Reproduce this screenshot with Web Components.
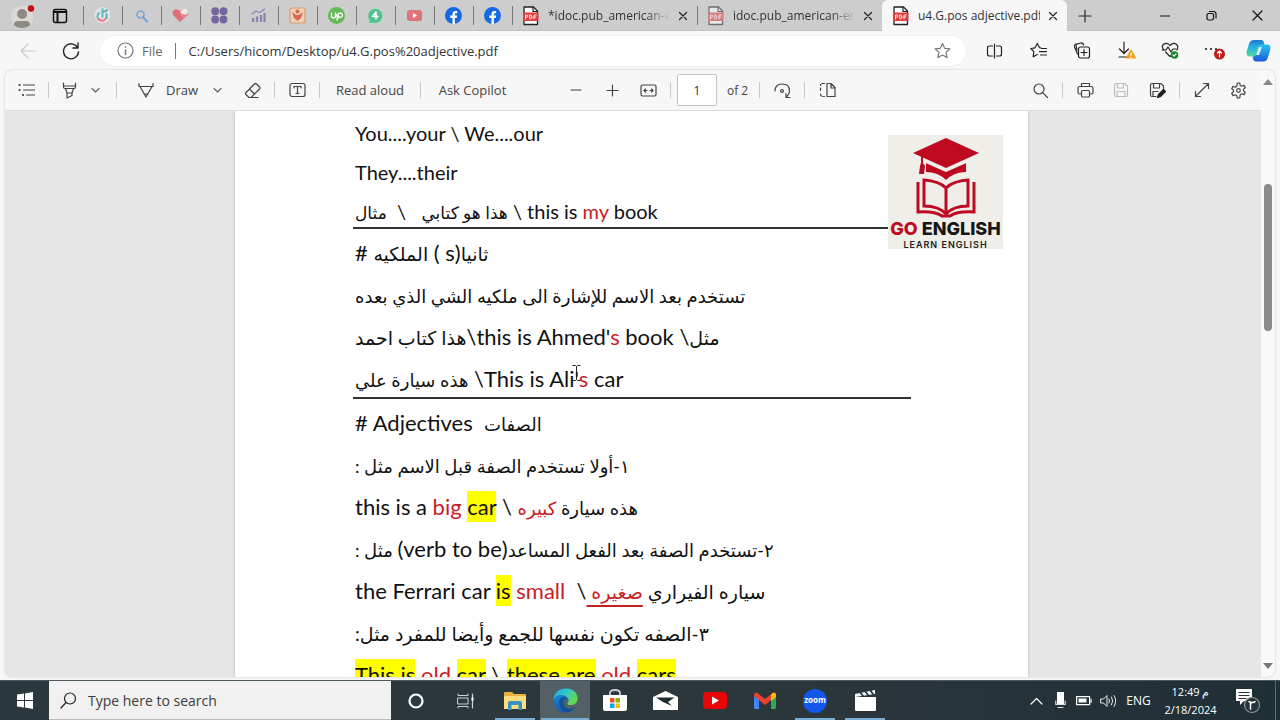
<!DOCTYPE html>
<html lang="en">
<head>
<meta charset="utf-8">
<title>u4.G.pos adjective.pdf</title>
<style>
html,body{margin:0;height:100%}
body{font-family:"Open Sans","Noto Sans",sans-serif;color:#2b2b2b;background:#f7f7f7;overflow:hidden}
</style>
</head>
<body>
<desktop-screen></desktop-screen>
<script>
const S = (body, w = 20, h = w, extra = '') =>
  `<svg width="${w}" height="${h}" viewBox="0 0 ${w} ${h}" fill="none" stroke="currentColor" stroke-width="1.2" stroke-linecap="round" stroke-linejoin="round" aria-hidden="true" ${extra}>${body}</svg>`;
const pdf = S(`<path d="M3 1h9.500l4 4v13.500H3z" fill="#fff" stroke="#222" stroke-width="1.300"/><path d="M12 1V5.500h4.500" stroke="#222"/><rect x="2" y="6.500" width="15.500" height="8.500" rx="1" fill="#e23b3b" stroke="none"/><path d="M4.500 13V9h1.300a1 1 0 010 2.200H4.500M8.800 9v4h.7q1.500-.3 1.500-2t-1.500-2zM13 13V9h2.200M13 11h1.800" stroke="#fff" stroke-width=".9"/>`, 19, 20);
const ICONS = {
  avatar: S(`<circle cx="12" cy="14" r="11" fill="#dcd9d5" stroke="none"/><circle cx="12" cy="11" r="5" fill="#8d8984" stroke="none"/><path d="M4 22q0-4 4-4h8q4 0 4 4-3 3-8 3t-8-3z" fill="#8d8984" stroke="none"/><circle cx="21" cy="5.500" r="3.200" fill="#c30d0d" stroke="none"/>`, 26, 26),
  workspace: S(`<rect x="1.500" y="1.500" width="13" height="13" rx="2" stroke="#111" stroke-width="1.500"/><path d="M2 4h12M5.500 5v9" stroke="#111" stroke-width="2"/>`, 16),
  tik: S(`<circle cx="8.500" cy="8" r="8" fill="#e4e2e3" stroke="none"/><path d="M8.500 2v8M5 6q-3 3-.5 6.500" stroke="#63c0bd" stroke-width="2"/><path d="M4.500 12q4 4 8-1" stroke="#e8788e" stroke-width="2"/><path d="M8.500 5q4-1 4.500-2M12.500 7v4" stroke="#5aa9b8" stroke-width="1.800"/>`, 17),
  find: S(`<circle cx="6.500" cy="6.500" r="3.500" stroke="#71a5d2" stroke-width="1.500"/><path d="M9 9l4 4.500" stroke="#71a5d2" stroke-width="2"/>`, 16),
  heart: S(`<path d="M8 15L1.500 8.500Q-.5 5 2 3t6 1q3-3 6-1t1 5.500z" fill="#e07078" stroke="none"/><path d="M8 5l3-3q4-1 5 3l-2 3-4-1z" fill="#f3e8e8" stroke="none"/><path d="M9 7l3 3" stroke="#e99"/>`, 17),
  dots: S(`<g fill="#74669a" stroke="none"><circle cx="4.200" cy="4.200" r="3.900"/><circle cx="12.500" cy="4.200" r="3.900"/><circle cx="4.200" cy="12.500" r="3.900"/><circle cx="12.500" cy="12.500" r="3.900"/></g>`, 17),
  chart: S(`<path d="M3 11v4M7 9.500V15M11 8v7M14.500 6v9" stroke="#8984ae" stroke-width="2.200" stroke-linecap="butt"/><path d="M2 7l4-3 4 1.500 4.500-3.500" stroke="#8984ae"/>`, 17),
  person: S(`<rect x="1" y="1" width="15" height="15" rx="2" fill="#ecd2b9" stroke="#d79c73"/><circle cx="8.500" cy="4.500" r="2" fill="#d8684e" stroke="none"/><path d="M3 5l2 6 3.500 3L12 11l2-6-4 3H7z" fill="#d8684e" stroke="none"/>`, 17),
  up: S(`<circle cx="8.500" cy="8.500" r="8.500" fill="#66b957" stroke="none"/><path d="M3.500 6v3q0 2 2 2t2-2V6q1 3 2.500 5M9 13l1-5q.6-2 2.500-2 2 .3 2 2.300t-2 2.200q-1.500 0-2.500-2" stroke="#fff" stroke-width="1.300"/>`, 17),
  four: S(`<path d="M2 15l-1 1.500 5-.5a7.500 7.500 0 10-4-3z" fill="#55bf8e" stroke="#bfe3d0" stroke-width=".8"/><path d="M9 12V5L5.500 9.500H11" stroke="#fff" stroke-width="1.500"/>`, 17),
  ytPale: S(`<rect x="0" y="2" width="15" height="11" rx="2.500" fill="#dd747c" stroke="none"/><path d="M6 5l4 2.500L6 10z" fill="#fff" stroke="none"/>`, 15),
  fb: S(`<circle cx="8.500" cy="8.500" r="8.500" fill="#1768e5" stroke="none"/><path d="M7.500 17v-6H5.300V8.500h2.200V7q0-3 3-3h1.700v2.300H11q-1.100 0-1.100 1.200v1h2.200l-.4 2.500H9.900v6z" fill="#fff" stroke="none"/>`, 17),
  pdf, x: S(`<path d="M1.500 1.500l7 7m0-7l-7 7" stroke="#222"/>`, 10),
  plus: S(`<path d="M7 1v12M1 7h12"/>`, 14),
  min: S(`<path d="M0 5h10" stroke="#111"/>`, 10),
  restore: S(`<rect x="1" y="3.500" width="6.500" height="6.500" rx="1.500" stroke="#111"/><path d="M3.500 1.500h4q2.500 0 2.500 2.500v4" stroke="#111"/>`, 11),
  close: S(`<path d="M1 1l9 9m0-9l-9 9" stroke="#111"/>`, 11),
  back: S(`<path d="M16 8H1m7-7L1 8l7 7" stroke="#c9c9c9"/>`, 17, 16),
  refresh: S(`<path d="M15.500 5.500A7.500 7.500 0 1016.500 10M16 1v5h-5" stroke="#222" stroke-width="1.400"/>`, 18),
  info: S(`<circle cx="8.500" cy="8.500" r="7.500" stroke="#777"/><path d="M8.500 8v4.500M8.500 5v.3" stroke="#777" stroke-width="1.500"/>`, 17),
  star: S(`<path d="M8.500 1.500l2.200 4.800 5.200.6-3.900 3.500 1.100 5.200-4.600-2.600-4.600 2.600L5 10.400 1.100 6.900l5.200-.6z" stroke="#777"/>`, 17),
  split: S(`<path d="M6.500 3H3.500Q1.500 3 1.500 5v6q0 2 2 2h3M10.500 3h3q2 0 2 2v6q0 2-2 2h-3M8.500 1v14" stroke="#222"/>`, 17, 16),
  favs: S(`<path d="M11 6l-1.500-.3L7.300 1.500 5 5.800l-4.200.7 3 3.200-.6 5 4.100-2.200M11.500 6.500h5M9.500 9.700h7M10.500 13h6" stroke="#222"/>`, 17),
  collect: S(`<path d="M4.500 12L1.500 5q-.5-2 1-2.700L8 1q2-.3 2.600 2" stroke="#222"/><rect x="5.500" y="5" width="11" height="11" rx="2" stroke="#222"/><path d="M11 7.500v6M8 10.500h6M3 3l1 5" stroke="#222"/>`, 18),
  down: S(`<path d="M7 1v11M2.500 8L7 12.500 11.500 8M2 16h8" stroke="#222"/><path d="M14 9l4.500 8h-9z" fill="#f5a11a" stroke="#f5a11a"/><path d="M14 12v2.500M14 16.300v.1" stroke="#fff"/>`, 19),
  health: S(`<path d="M3 8Q-.5 4 3 2t6 1.500Q12 0 15 2t1 6M4.500 10l4.500 4.500L11 13M1 8h4l2-3 3 5 2-3h3" stroke="#222"/><circle cx="13.500" cy="13" r="3.800" fill="#128a22" stroke="none"/><path d="M12 13l1 1 2-2" stroke="#fff"/>`, 18),
  more: S(`<g fill="#222" stroke="none"><circle cx="3" cy="7" r="1.100"/><circle cx="8" cy="7" r="1.100"/><circle cx="13" cy="7" r="1.100"/></g><circle cx="16.500" cy="12" r="5.500" fill="#b9211d" stroke="none"/><path d="M16.500 15V9.500M14.500 11l2-2 2 2" stroke="#fff"/>`, 22, 18),
  copilot: `<svg width="25" height="23" viewBox="0 0 25 23" aria-hidden="true"><defs><linearGradient id="a" x1="0" y1="0" x2="0" y2="1"><stop stop-color="#1e75d0"/><stop offset=".45" stop-color="#22b6dc"/><stop offset="1" stop-color="#58d99a"/></linearGradient><linearGradient id="b" x1="0" y1="0" x2="0" y2="1"><stop stop-color="#2ac4ea"/><stop offset="1" stop-color="#1b59dd"/></linearGradient></defs><path d="M8 1h7q2.500 0 3 3l.5 2h-4q-2 0-2.600 2L10 15q-.8 2.500-3 2.500H4Q0 17.500.5 13L3 5q1-4 5-4z" fill="url(#a)"/><path d="M17 22.500h-7q-2.500 0-3-3l-.3-2q2.600 0 3.300-2.500L12 8q.8-2.500 3-2.500h6q4 0 3.500 4.500L22 18q-1 4.500-5 4.500z" fill="url(#b)"/><path d="M13 8h3l-3 8h-3z" fill="#d5f4ff"/></svg>`,
  list: S(`<path d="M5.500 3h11M5.500 8h11M8.500 13h8" /><path d="M1.500 3h.1M1.500 8h.1M5 13h.1" stroke-width="2.200"/>`, 17, 16),
  marker: S(`<path d="M1.500 1v4q0 1.500 1.500 1.500h9q1.500 0 1.500-1.500V1M1.500 4h12M3.500 6.500L5 11h5l1.500-4.500M5 11v5l5-2.500V11"/>`, 15, 17),
  chev: S(`<path d="M1 1.500l3.500 3.500L8 1.500" stroke="#666"/>`, 9, 7),
  pen: S(`<path d="M1 1.500v3h14v-3M2 4.500L8 15l6-10.500M6 12h4"/>`, 16),
  eraser: S(`<path d="M2 10.500L10.500 2q1-1 2 0l3 3q1 1 0 2L7 15.500H5L2 12.500q-1-1 0-2zM5.500 7l5 5M5 15.500h9"/>`, 17),
  text: S(`<rect x="1" y="1.500" width="15" height="13" rx="2"/><path d="M5 6V4.500h7V6M8.500 4.500v7M7 11.500h3"/>`, 17, 16),
  minus: S(`<path d="M1 6h10"/>`, 12), add: S(`<path d="M6.500 1v11M1 6.500h11"/>`, 13),
  fit: S(`<rect x="1" y="1" width="15" height="11" rx="1.500"/><path d="M7 6.500H4M5.500 5L4 6.500 5.500 8M10 6.500h3M11.500 5L13 6.500 11.500 8"/>`, 17, 13),
  rotate: S(`<path d="M1 9q0-7 7-7 7.500 0 7.500 7 0 3-3 6M16 15.500h-4v-4"/><circle cx="8" cy="9" r="1.400"/>`, 17),
  pages: S(`<path d="M5.500 1.500H4q-2.500 0-2.500 2M1.500 6v4M1.500 12q0 2.500 3 2.500h1" stroke-dasharray="2.500 1.500"/><path d="M8 1.500h4l4 4v9H8zM12 1.500V6h4"/>`, 17, 16),
  search: S(`<circle cx="6" cy="6" r="5"/><path d="M9.700 9.700L14.500 14.500"/>`, 15),
  print: S(`<path d="M4.500 4V1.500h8V4M4 12H2.500Q1 12 1 10.500v-4Q1 4.500 3 4.500h11q2 0 2 2v4q0 1.500-1.500 1.500H13"/><rect x="4.500" y="8.500" width="8" height="6.500" rx="1"/>`, 17, 16),
  save: S(`<path d="M1.500 3q0-1.500 1.500-1.500h9l2.500 2.500v9q0 1.500-1.500 1.500H3Q1.500 14.500 1.500 13zM4.500 1.500V6h6V1.500M4 14.500v-5h8v5"/>`, 16),
  saveas: S(`<path d="M7 14.500H3Q1.500 14.500 1.500 13V3q0-1.500 1.500-1.500h9l2.500 2.500v3M4.500 1.500V6h6V1.500M4 14.500v-5h5"/><path d="M8.500 15.500l1-3 5-5 2 2-5 5z" fill="#222" stroke="#222"/>`, 17, 16),
  expand: S(`<path d="M1.500 14.500l13-13M9.500 1.500h5v5M1.500 9.500v5h5"/>`, 16),
  gear: S(`<path d="M7.300 1h2.400l.5 2.300 1.600.9 2.200-.8 1.300 2.100-1.700 1.600v1.800l1.700 1.600-1.300 2.100-2.200-.8-1.600.9L9.700 16H7.300l-.5-2.300-1.600-.9-2.200.8-1.300-2.100 1.700-1.600V8.100L1.700 6.500 3 4.400l2.200.8 1.600-.9z"/><circle cx="8.500" cy="8.500" r="1.800"/>`, 17),
  win: S(`<path d="M0 2.500l7-1v6.500H0zM8 1.400L16 0v8H8zM0 9h7v6.500l-7-1zM8 9h8v8l-8-1.400z" fill="#fff" stroke="none"/>`, 16, 17),
  tsearch: S(`<circle cx="10" cy="6.500" r="5.500" stroke="#222"/><path d="M6 10.500L1 16" stroke="#222"/>`, 17),
  cortana: S(`<circle cx="8" cy="8" r="6.500" stroke="#fff" stroke-width="2.200"/>`, 16),
  taskview: S(`<path d="M1 1v1.500h10V1M1 15v-1.500h10V15M1 5h10v6H1z" stroke="#cdd3d5" stroke-width="1"/><path d="M15.500 1v14" stroke="#cdd3d5"/><path d="M15.500 5v2" stroke="#fff" stroke-width="2"/>`, 17, 16),
  folder: S(`<path d="M0 2q0-1 1-1h7l2 2h11q1 0 1 1v14H0z" fill="#e9b13e" stroke="none"/><path d="M0 5h22v13H0z" fill="#ffdc80" stroke="none"/><path d="M4 19v-7q0-2 2-2h10q2 0 2 2v7h-3.500v-5h-7v5z" fill="#3792c4" stroke="none"/>`, 22, 20),
  edge: `<svg width="25" height="25" viewBox="0 0 25 25" aria-hidden="true"><defs><linearGradient id="e" x1="0" y1="0" x2="1" y2=".5"><stop stop-color="#249fe0"/><stop offset=".5" stop-color="#31c6cf"/><stop offset="1" stop-color="#63d94e"/></linearGradient><linearGradient id="f" x1="0" y1="0" x2="0" y2="1"><stop stop-color="#1a86d0"/><stop offset="1" stop-color="#1a57ae"/></linearGradient></defs><path d="M.5 12Q1 1 12.500.5 24.500 1 24.500 11q-.5 6-7 6-4 0-3-2 2-2 .5-4.500Q12 6.500 7.500 7.500 2 9 .5 12z" fill="url(#e)"/><path d="M.5 12Q3 6.500 9 7.200q4 .5 5.500 3.300-4 1-4 5 .5 5 6 5.500 3.500 0 6-2-3.500 5.500-10 5.500Q1 24 .5 12z" fill="url(#f)"/><path d="M8 9.500Q4 14 7.500 19.500q2.500 4 7 4.800 5-.8 8-5.300-3 2-6 1.800-6-.8-6-5.500 0-4 4-4.800-2.500-3-6.500-1z" fill="#114a8b" opacity=".75"/></svg>`,
  store: S(`<path d="M7 6V4q0-3 5-3t5 3v2" stroke="#c8cdd0" stroke-width="1.800"/><path d="M0 6h24v14q0 2-2 2H2q-2 0-2-2z" fill="#fff" stroke="none"/><g stroke="none"><path d="M7 9h4.500v4.500H7z" fill="#f25022"/><path d="M12.500 9H17v4.500h-4.500z" fill="#7fba00"/><path d="M7 14.500h4.500V19H7z" fill="#00a4ef"/><path d="M12.500 14.500H17V19h-4.500z" fill="#ffb900"/></g>`, 24, 23),
  mail: S(`<path d="M0 7l12.500-6L25 7v13H0z" fill="#fff" stroke="none"/><path d="M3 7.500h18.500l-6.500 4.500 4 4-9-4z" fill="#1f2b2f" stroke="none"/>`, 25, 21),
  yt: S(`<rect width="24" height="17" rx="4" fill="#e90606" stroke="none"/><path d="M9 4.500l7 4-7 4z" fill="#fff" stroke="none"/>`, 24, 17),
  gmail: S(`<g stroke="none"><path d="M0 3l5 4v10H1.500Q0 17 0 15.500z" fill="#4285f4"/><path d="M17 7l5-4v12.500q0 1.500-1.500 1.500H17z" fill="#34a853"/><path d="M0 3Q0 0 3 .8L11 7l8-6.200Q22 0 22 3v1l-5 4v0l-6 5-6-5-5-4z" fill="#ea4335"/><path d="M17 2.400l2-1.600Q22 0 22 3v2l-5 4z" fill="#fbbc04"/></g>`, 22, 17),
  clap: S(`<path d="M1 8h21v13q0 1-1 1H2q-1 0-1-1z" fill="#fff" stroke="none"/><path d="M1 5L21 1v4L1 8z" fill="#fff" stroke="none"/><path d="M6 3l3 4M11 2l3 4M16 1l3 4" stroke="#27343a" stroke-width="1.800"/>`, 23, 23),
  caret: S(`<path d="M1 7l5.500-5.500L12 7" stroke="#fff"/>`, 13, 8),
  mic: S(`<rect x="2" y="0" width="7" height="12" fill="#fff" stroke="none"/><path d="M.8 9v3.500h9.400V9M3 15.500h5" stroke="#dfe3e4" stroke-width="1.200"/>`, 11, 17),
  battery: S(`<rect x=".6" y="1.600" width="13" height="8" stroke="#fff"/><path d="M2.500 3.500h8v4h-8z" fill="#fff" stroke="none"/><path d="M15 4v3.500" stroke="#fff"/>`, 16, 11),
  sound: S(`<path d="M1 5h2.500L7 1.500v11L3.500 9H1zM9 5q1.200 2 0 4M11.500 3q2.500 4 0 8M14 1.500q3.500 5.500 0 11" stroke="#e3e7e8" stroke-width="1"/>`, 17, 14),
  note: S(`<path d="M1 1h16v12H9l-4 4v-4H1z" fill="#fff" stroke="none"/><path d="M4 4.500h10M4 7.500h10M4 10.500h7" stroke="#27343a"/><circle cx="17" cy="17" r="7.500" fill="#27343a" stroke="#8b9497"/><path d="M14 13.500q1.500 1.500 3 1 2 .3 3-1M15.500 14v7" stroke="#fff" stroke-width="1.500"/>`, 26, 26),
};
const define = (name, html) => customElements.define(name, class extends HTMLElement {
  connectedCallback() {
    if (this.shadowRoot) return;
    this.attachShadow({ mode: 'open' }).innerHTML = typeof html === 'function' ? html(this) : html;
  }
});

define('ui-icon', el => `<style>:host{display:inline-flex;flex:none}svg{display:block}</style>${ICONS[el.getAttribute('name')] || ''}`);

define('icon-button', el => `<style>
:host{display:flex;flex:none;width:36px;align-items:stretch}
:host([disabled]){color:#bdbdbd}
button{all:unset;box-sizing:border-box;flex:1;display:flex;align-items:center;justify-content:center;color:inherit;min-height:28px}
</style><button aria-label="${el.getAttribute('label')}"><ui-icon name="${el.getAttribute('icon')}"></ui-icon></button>`);

define('browser-tab', el => `<style>
:host{display:flex;flex:0 1 185px;min-width:0;height:31px;align-items:center;box-sizing:border-box;font-size:12px}
:host([pinned]){flex:none;width:39px;justify-content:center}
:host(:not([active]))::before{content:"";flex:none;width:1px;height:19px;background:#777;margin-right:auto}
:host([pinned])::after{content:"";width:1px;margin-left:auto}
:host([active]){background:#f7f7f7;border-radius:6px 6px 0 0;padding-left:1px}
.pic{margin:0 8px;display:flex}
:host([pinned]) .pic{margin:0}
:host([faded]) .pic{opacity:.55}
.title{flex:1;min-width:0;overflow:hidden;white-space:nowrap;color:#333}
:host(:not([active])) .title{-webkit-mask-image:linear-gradient(90deg,#000 80%,transparent)}
button{all:unset;flex:none;width:26px;margin-right:1px;display:flex;justify-content:center}
</style><span class="pic"><ui-icon name="${el.getAttribute('icon')}"></ui-icon></span>${el.hasAttribute('pinned') ? '' : '<span class="title"><slot></slot></span><button aria-label="Close tab"><ui-icon name="x"></ui-icon></button>'}`);

define('tab-strip', `<style>
:host{display:flex;background:#cdcdcd;height:31px;flex:none;box-shadow:inset 0 -1px #c2c2c2}
.lead{display:flex;width:83px}
.end{margin-left:auto;display:flex}
</style>
<div class="lead"><icon-button style="width:46px" icon="avatar" label="Profile"></icon-button><icon-button style="width:28px" icon="workspace" label="Workspaces"></icon-button></div>
${['tik','find','heart','dots','chart','person','up','four','ytPale','fb','fb'].map(i => `<browser-tab pinned icon="${i}"></browser-tab>`).join('')}
<browser-tab icon="pdf">*idoc.pub_american-en</browser-tab>
<browser-tab icon="pdf" faded>idoc.pub_american-eng</browser-tab>
<browser-tab icon="pdf" active>u4.G.pos adjective.pdf</browser-tab>
<icon-button icon="plus" label="New tab"></icon-button>
<div class="end"><icon-button style="width:46px" icon="min" label="Minimize"></icon-button><icon-button style="width:46px" icon="restore" label="Restore"></icon-button><icon-button style="width:46px" icon="close" label="Close"></icon-button></div>`);

define('address-bar', `<style>
:host{display:flex;align-items:center;height:39px;flex:none;padding-left:6px}
.field{flex:1;min-width:0;display:flex;align-items:center;height:30px;border-radius:15px;background:#fff;margin:0 6px 0 8px;padding-left:17px;font-size:13px;box-shadow:0 0 2px #e4e4e4}
label{color:#666;padding:0 12px 0 8px}
input{all:unset;flex:1;min-width:0;border-left:1px solid #777;padding-left:13px;line-height:16px;color:#333}
icon-button.t{width:44px}
</style>
<icon-button style="width:44px" icon="back" label="Back"></icon-button><icon-button style="width:42px" icon="refresh" label="Refresh"></icon-button>
<div class="field"><ui-icon name="info"></ui-icon><label for="url">File</label><input id="url" value="C:/Users/hicom/Desktop/u4.G.pos%20adjective.pdf"><icon-button style="width:48px" icon="star" label="Favorite"></icon-button></div>
${[['split','Split screen'],['favs','Favorites'],['collect','Collections'],['down','Downloads'],['health','Browser essentials'],['more','Settings and more'],['copilot','Copilot']].map(([i, l]) => `<icon-button class="t" icon="${i}" label="${l}"></icon-button>`).join('')}`);

define('tool-sep', `<style>:host{display:flex;flex:none;width:9px;justify-content:center}i{width:1px;height:16px;background:#c6c6c6}</style><i></i>`);

define('pdf-toolbar', `<style>
:host{display:flex;align-items:center;height:41px;background:#f7f7f7;color:#444;font-size:13px;padding-left:3px;border-bottom:1px solid #dcdcdc;box-sizing:border-box}
.g{display:flex;align-items:center;flex:none}
.draw{margin:0 7px}
.mid{margin-left:38px}
.right{margin-left:auto;padding-right:5px}
button{all:unset;box-sizing:border-box;text-align:center;white-space:nowrap}
input{box-sizing:border-box;width:40px;height:32px;border:1px solid #c4c4c4;border-radius:2px;background:#fff;text-align:center;font:12px "Open Sans",sans-serif;color:#333;margin:0 10px 0 2px;padding:0}
label{font-size:12px;width:28px}
.small{width:20px}
</style>
<div class="g"><icon-button icon="list" label="Contents"></icon-button><tool-sep></tool-sep><icon-button style="width:32px" icon="marker" label="Highlight"></icon-button><icon-button class="small" icon="chev" label="Highlight colors"></icon-button></div>
<div class="g draw"><tool-sep></tool-sep></div>
<div class="g"><icon-button icon="pen" label="Pen"></icon-button><button style="width:36px">Draw</button></div>
<div class="g draw"><icon-button class="small" icon="chev" label="Pen options"></icon-button></div>
<div class="g"><icon-button icon="eraser" label="Erase"></icon-button><tool-sep></tool-sep><icon-button icon="text" label="Add text"></icon-button><tool-sep></tool-sep><button style="width:92px">Read aloud</button><tool-sep></tool-sep><button style="width:95px">Ask Copilot</button></div>
<div class="g mid"><icon-button icon="minus" label="Zoom out"></icon-button><icon-button icon="add" label="Zoom in"></icon-button><icon-button icon="fit" label="Fit to width"></icon-button><tool-sep></tool-sep><input id="pg" value="1"><label for="pg">of 2</label><tool-sep></tool-sep><icon-button icon="rotate" label="Rotate"></icon-button><tool-sep></tool-sep><icon-button icon="pages" label="Page view"></icon-button></div>
<div class="g right"><icon-button icon="search" label="Find"></icon-button><tool-sep></tool-sep><icon-button icon="print" label="Print"></icon-button><icon-button icon="save" label="Save" disabled></icon-button><icon-button icon="saveas" label="Save as"></icon-button><tool-sep></tool-sep><icon-button icon="expand" label="Full screen"></icon-button><icon-button icon="gear" label="Settings"></icon-button></div>`);

define('go-logo', `<style>
:host{display:flex;flex-direction:column;align-items:center;background:#efeee9;width:115px;height:114px;white-space:nowrap;font-family:"Inter",sans-serif}
svg{flex:none}
b{font-weight:800;font-size:18px;line-height:20px;color:#161616}
b span{color:#bd0a20}
small{font-weight:600;font-size:9px;line-height:12px;letter-spacing:1px;color:#222}
</style>
<svg width="68" height="84" viewBox="0 0 68 84" aria-hidden="true"><g fill="#bd0a20"><path d="M34 3l33 15-33 15L1 18z"/><path d="M14 27l20 9 20-9v10q-12 0-20 8-8-8-20-8z"/><path d="M9 20h2v8l2 3-1 8H7l1-8 1-3z"/></g><path d="M14 27l20 9 20-9" fill="none" stroke="#efeee9" stroke-width="2"/><g fill="none" stroke="#bd0a20" stroke-width="3"><path d="M34 53Q27 46 12 45v26q15 0 22 8 7-8 22-8V45q-15 1-22 8zv25"/><path d="M6 47v30q17-1 24 4h8q7-5 24-4V47"/></g></svg>
<b><span>GO</span> ENGLISH</b><small>LEARN ENGLISH</small>`);

define('doc-line', `<style>
:host{display:block;box-sizing:border-box;height:42px;line-height:42px;white-space:pre;font-size:22px}
:host([tight]){height:39px;line-height:39px;font-size:20px}
:host([ruled]){height:37px;line-height:32px;padding-top:3px;border-bottom:2px solid #333;margin-bottom:3px;font-size:20px}
:host([ruled=last]){height:41px;line-height:36px;font-size:22px}
</style><slot></slot>`);

define('pdf-page', `<style>
:host{display:block;box-sizing:border-box;flex:0 1 793px;background:#fff;padding:3px 117px 0 120px;position:relative;color:#111;font-family:"Lato","DejaVu Sans",sans-serif;box-shadow:0 0 3px #bbb}
go-logo{position:absolute;top:24px;right:25px}
.ibeam{position:absolute;left:337px;top:254px}
doc-line{margin-left:-2px;padding-left:2px}
[dir=rtl]{unicode-bidi:isolate;font-size:18px}
.big [dir=rtl]{font-size:19px}
.low [dir=rtl]{font-size:17px}
.en{font-size:22px}
mark{background:#ff0;color:inherit;padding:2px 0}
u{text-decoration-thickness:2px;text-underline-offset:6px}
.red{color:#c8201f}
</style>
<doc-line tight>You....your \\ We....our</doc-line>
<doc-line tight>They....their</doc-line>
<doc-line ruled class="low"><span dir="rtl">مثال</span>  \\   <span dir="rtl">هذا هو كتابي</span> \\ this is <span class="red">my</span> book</doc-line>
<doc-line class="big"># <span dir="rtl">الملكيه</span> ( s)<span dir="rtl">ثانيا</span></doc-line>
<doc-line><span dir="rtl">تستخدم بعد الاسم للإشارة الى ملكيه الشي الذي بعده</span></doc-line>
<doc-line class="big"><span dir="rtl">هذا كتاب احمد</span>\\this is Ahmed'<span class="red">s</span> book \\<span dir="rtl">مثل</span></doc-line>
<doc-line ruled="last"><span dir="rtl">هذه سيارة علي</span> \\This is Ali'<span class="red">s</span> car</doc-line>
<doc-line># Adjectives  <span dir="rtl">الصفات</span></doc-line>
<doc-line><span dir="rtl">١-أولا تستخدم الصفة قبل الاسم مثل :</span></doc-line>
<doc-line>this is a <span class="red">big</span> <mark>car</mark> \\ <span dir="rtl">هذه سيارة <span class="red">كبيره</span></span></doc-line>
<doc-line><span dir="rtl">٢-تستخدم الصفة بعد الفعل المساعد<span class="en">(verb to be)</span> مثل :</span></doc-line>
<doc-line class="big">the Ferrari car <mark>is</mark> <span class="red">small</span>  \\<span dir="rtl">سياره الفيراري <u class="red">صغيره&nbsp;</u></span></doc-line>
<doc-line class="big"><span dir="rtl">٣-الصفه تكون نفسها للجمع وأيضا للمفرد مثل:</span></doc-line>
<doc-line><mark>This is</mark> <span class="red">old</span> <mark>car</mark> \\ <mark>these are</mark> <span class="red">old</span> <mark>cars</mark></doc-line>
<go-logo></go-logo>
<svg class="ibeam" width="9" height="17" viewBox="0 0 9 17" fill="none" stroke="#222" aria-hidden="true"><path d="M.5.500h3l1 1 1-1h3M4.500 1v14M.5 15.500h3l1-1 1 1h3"/></svg>`);

define('pdf-viewer', `<style>
:host{display:flex;flex:1;min-height:0;margin:0 5px 3px;border-radius:8px;overflow:hidden;background:#e6e6e6;box-shadow:0 0 2px #bbb}
.main{flex:1;min-width:0;display:flex;flex-direction:column}
.canvas{flex:1;min-height:0;display:flex;justify-content:center;align-items:flex-start;overflow:hidden;padding-right:3px}
.bar{width:14px;background:#f9f9f9;display:flex;flex-direction:column;align-items:center;padding:9px 0 8px;box-sizing:border-box}
.bar i{flex:0 0 147px;width:8px;border-radius:4px;background:#8a8a8a;margin-top:99px}
.bar svg:last-child{margin-top:auto}
</style>
<div class="main"><pdf-toolbar></pdf-toolbar><div class="canvas"><pdf-page></pdf-page></div></div>
<div class="bar"><svg width="10" height="6" aria-hidden="true"><path d="M0 6l5-6 5 6z" fill="#888"/></svg><i></i><svg width="10" height="6" aria-hidden="true"><path d="M0 0h10L5 6z" fill="#777"/></svg></div>`);

define('task-item', el => `<style>
:host{display:flex;flex:none;width:50px;box-sizing:border-box;justify-content:center}
:host([open]) button{box-shadow:inset 0 -2px #78add6}
:host([open]){padding:0 5px}
:host([current]){padding:0 1px;background:#536166}
button{all:unset;flex:1;display:flex;align-items:center;justify-content:center}
.zoom{width:24px;height:24px;border-radius:50%;background:#1257ea;color:#fff;font:700 8px/22px "Open Sans",sans-serif;text-align:center}
</style><button aria-label="${el.getAttribute('label')}">${el.getAttribute('icon') === 'zoom' ? '<span class="zoom">zoom</span>' : `<ui-icon name="${el.getAttribute('icon')}"></ui-icon>`}</button>`);

define('task-bar', `<style>
:host{display:flex;flex:none;height:39px;background:linear-gradient(90deg,#2b393e,#2c373b 60%,#1f2f36);color:#fff;font-size:12px;border-top:1px solid #4c585c}
.search{display:flex;align-items:center;flex:0 1 342px;min-width:0;background:#f1f1f1;padding-left:11px;box-sizing:border-box;border-bottom:1px solid #bbb}
input{all:unset;flex:1;min-width:0;padding-left:11px;font:14px "Open Sans",sans-serif;color:#333}
input::placeholder{color:#3c3c3c}
.tray{margin-left:auto;display:flex;align-items:center;flex:none}
.tray icon-button{width:24px}
.lang{width:37px;text-align:center}
.clock{width:67px;text-align:center;line-height:18px;font-size:11px}
.edge{align-self:stretch;width:1px;background:#5d696d;margin:0 4px 0 3px}
</style>
<task-item style="width:49px" icon="win" label="Start"></task-item>
<div class="search"><ui-icon name="tsearch"></ui-icon><input aria-label="Search" placeholder="Type here to search"></div>
<task-item icon="cortana" label="Cortana"></task-item><task-item icon="taskview" label="Task view" style="width:49px"></task-item>
<task-item icon="folder" label="File Explorer" open></task-item><task-item icon="edge" label="Edge" open current></task-item><task-item icon="store" label="Store"></task-item><task-item icon="mail" label="Mail"></task-item><task-item icon="yt" label="YouTube"></task-item><task-item icon="gmail" label="Gmail"></task-item><task-item icon="zoom" label="Zoom" open></task-item><task-item icon="clap" label="Clips" open></task-item>
<div class="tray"><icon-button icon="caret" label="Hidden icons"></icon-button><icon-button icon="mic" label="Microphone"></icon-button><icon-button icon="battery" label="Battery"></icon-button><icon-button icon="sound" label="Volume"></icon-button><span class="lang">ENG</span><div class="clock"><div>12:49 م</div><div>2/18/2024</div></div><icon-button style="width:48px" icon="note" label="Notifications"></icon-button><i class="edge"></i></div>`);

define('desktop-screen', `<style>:host{display:flex;flex-direction:column;height:100vh;overflow:hidden}</style>
<tab-strip></tab-strip><address-bar></address-bar><pdf-viewer></pdf-viewer><task-bar></task-bar>`);
</script>
</body>
</html>
